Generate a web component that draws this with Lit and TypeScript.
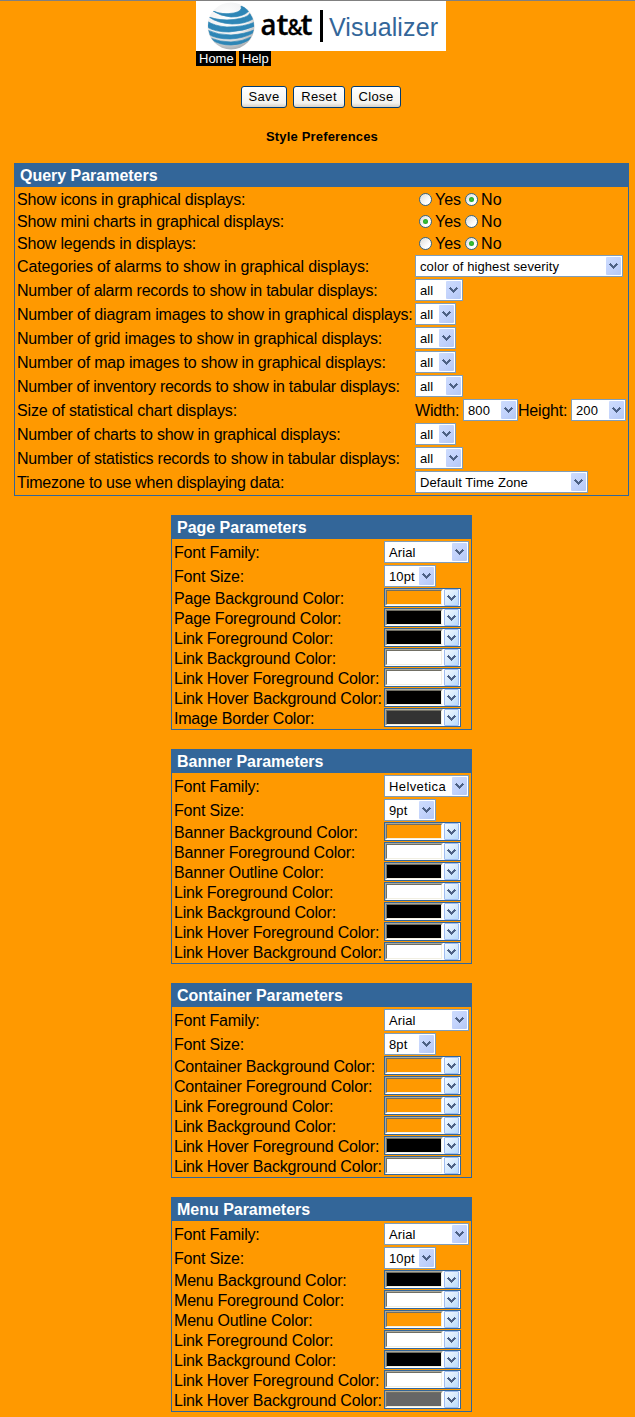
import { LitElement, html, css, svg } from "lit";
import { customElement, property } from "lit/decorators.js";
import { classMap } from "lit/directives/class-map.js";

const chevron = svg`<path d="M1 0h1v1h1v1h1v1h1v-1h1v-1h1v-1h1v1h1v1h-1v1h-1v1h-1v1h-1v1h-1v-1h-1v-1h-1v-1h-1v-1h-1v-1h1z" fill="#4d6185" shape-rendering="crispEdges"/>`;

@customElement("xp-select")
export class XpSelect extends LitElement {
  @property() value = "";
  @property({ type: Number }) width = 48;
  static styles = css`
    :host { display: block; flex: none; }
    .box { box-sizing: border-box; height: 22px; border: 1px solid #7f9db9; background: #fff; display: flex;
      align-items: center; justify-content: space-between; padding: 0 1px 0 4px; font: 13px/18px "Liberation Sans", Arial, sans-serif;
      letter-spacing: .1px; color: #000; white-space: nowrap; }
    .text { padding-top: 1px; }
    .wide { letter-spacing: .4px; }
    .arrow { width: 15px; height: 18px; flex: none; display: flex; align-items: center; justify-content: center;
      border-radius: 1px; background: linear-gradient(135deg, #cddcfd, #c3d3fc 50%, #b4c8f6); }
  `;
  render() {
    return html`<div class="box" style="width:${this.width}px"><span class=${classMap({ text: true, wide: this.value === "Helvetica" })}>${this.value}</span><span class="arrow"><svg width="9" height="6">${chevron}</svg></span></div>`;
  }
}

@customElement("color-picker")
export class ColorPicker extends LitElement {
  @property() color = "#fff";
  static styles = css`
    :host { display: block; flex: none; }
    .box { box-sizing: border-box; width: 77px; height: 19px; border: 1px solid #336699; display: flex; background: #fff; }
    .well { box-sizing: border-box; width: 58px; height: 17px; border: 1px solid; border-color: #aca899 #fff #fff #aca899; }
    .fill { box-sizing: border-box; height: 15px; border: 1px solid; border-color: #716f64 #f1efe2 #f1efe2 #716f64; }
    .arrow { box-sizing: border-box; margin: 0 1px; width: 15px; height: 17px; display: flex; align-items: center; justify-content: center;
      border: 1px solid #9ebcf0; border-radius: 1px; background: linear-gradient(135deg, #f4faff, #b9dafb); }
  `;
  render() {
    return html`<div class="box"><div class="well"><div class="fill" style="background:${this.color}"></div></div><div class="arrow"><svg width="9" height="6">${chevron}</svg></div></div>`;
  }
}

// label, selected value, select width, label tracking
type Row = [string, string, number, number];
const queryRows: Row[] = [
  ["Categories of alarms to show in graphical displays:", "color of highest severity", 208, -0.16],
  ["Number of alarm records to show in tabular displays:", "all", 48, -0.25],
  ["Number of diagram images to show in graphical displays:", "all", 41, -0.18],
  ["Number of grid images to show in graphical displays:", "all", 41, -0.18],
  ["Number of map images to show in graphical displays:", "all", 41, -0.2],
  ["Number of inventory records to show in tabular displays:", "all", 48, -0.28],
  ["Size of statistical chart displays:", "", 0, -0.17],
  ["Number of charts to show in graphical displays:", "all", 41, -0.25],
  ["Number of statistics records to show in tabular displays:", "all", 48, -0.21],
  ["Timezone to use when displaying data:", "Default Time Zone", 173, -0.24],
];

const O = "#ff9900", K = "#000000", W = "#ffffff";
const panels: { title: string; family: string; size: string; colors: [string, string][] }[] = [
  { title: "Page", family: "Arial", size: "10pt", colors: [
    ["Page Background", O], ["Page Foreground", K], ["Link Foreground", K], ["Link Background", W],
    ["Link Hover Foreground", W], ["Link Hover Background", K], ["Image Border", "#333333"]] },
  { title: "Banner", family: "Helvetica", size: "9pt", colors: [
    ["Banner Background", O], ["Banner Foreground", W], ["Banner Outline", K], ["Link Foreground", W],
    ["Link Background", K], ["Link Hover Foreground", K], ["Link Hover Background", W]] },
  { title: "Container", family: "Arial", size: "8pt", colors: [
    ["Container Background", O], ["Container Foreground", O], ["Link Foreground", O], ["Link Background", O],
    ["Link Hover Foreground", K], ["Link Hover Background", W]] },
  { title: "Menu", family: "Arial", size: "10pt", colors: [
    ["Menu Background", K], ["Menu Foreground", W], ["Menu Outline", O], ["Link Foreground", W],
    ["Link Background", K], ["Link Hover Foreground", W], ["Link Hover Background", "#666666"]] },
];

@customElement("app-root")
export class AppRoot extends LitElement {
  static styles = css`
    :host { display: block; box-sizing: border-box; height: 1417px; overflow: hidden; background: #ff9900; border-top: 1px solid #808080;
      font: 16px/18px "Liberation Sans", Arial, sans-serif; color: #000; }
    .banner { width: 250px; margin-left: 196px; }
    .logo { display: block; background: #fff; }
    .nav { display: flex; gap: 3px; height: 15px; font-size: 13px; line-height: 15px; }
    .nav a { background: #000; color: #fff; padding: 0 3px; box-sizing: border-box; width: 40px; }
    .nav a.help { width: 32px; }
    .buttons { display: flex; gap: 6px; margin: 20px 0 0 241px; }
    button { box-sizing: border-box; height: 22px; padding: 0; border: 1px solid #003c74; border-radius: 3px; font: 13px/18px "Liberation Sans", Arial, sans-serif;
      letter-spacing: .35px; color: #000; background: linear-gradient(#fff, #f3f3ef 80%, #d6d0c5); }
    .save { width: 46px; } .reset { width: 52px; } .close { width: 50px; }
    h1 { margin: 20px 0 0 9px; font-size: 13px; line-height: 18px; letter-spacing: .17px; text-align: center; }
    .panel { box-sizing: border-box; width: 301px; margin: 0 0 19px 171px; border: 1px solid #336699; padding-bottom: 1px; }
    .panel.query { width: 615px; margin: 17px 0 19px 14px; }
    h2 { margin: 0 0 1px; height: 23px; padding-left: 5px; background: #336699; color: #fff; font-size: 16px; line-height: 23px; letter-spacing: -.02px; }
    .row { display: grid; grid-template-columns: 210px auto; height: 24px; align-items: center; padding-left: 2px; white-space: nowrap; }
    .label { padding-top: 2px; letter-spacing: -.2px; }
    .query .row { grid-template-columns: 398px auto; }
    .query .row.radio { height: 22px; }
    .row.color { height: 20px; align-items: start; }
    .row.color .label { line-height: 18px; }
    .cell { display: flex; align-items: center; }
    .dot { flex: none; box-sizing: border-box; width: 13px; height: 13px; border: 1px solid #33668c; border-radius: 50%; background: linear-gradient(135deg, #dcdcd7, #fff 70%); display: flex; align-items: center; justify-content: center; }
    .dot.on::before { content: ""; width: 5px; height: 5px; border-radius: 50%; background: radial-gradient(#3fc43a, #1a9a1a); }
    .radios { padding-left: 4px; }
    .radios span { margin: 0 4px 0 3px; padding-top: 2px; }
    .w { width: 48px; } .h { width: 53px; }
  `;
  radio(label: string, yes: boolean) {
    return html`<div class="row radio"><span class="label">${label}</span><div class="cell radios">
      <i class=${classMap({ dot: true, on: yes })}></i><span>Yes</span><i class=${classMap({ dot: true, on: !yes })}></i><span>No</span></div></div>`;
  }
  render() {
    return html`
      <div class="banner">
        <svg class="logo" width="250" height="50" viewBox="0 0 250 50">
          <defs><radialGradient id="g" cx=".42" cy=".3" r=".72"><stop offset="0" stop-color="#fff"/><stop offset=".6" stop-color="#f0f1f2"/><stop offset="1" stop-color="#a9adb0"/></radialGradient>
          <clipPath id="c"><circle cx="35" cy="25" r="23"/></clipPath></defs>
          <circle cx="35" cy="25" r="23.5" fill="url(#g)"/>
          <g clip-path="url(#c)" fill="#2e86b6" stroke="#2e86b6" stroke-width=".7">
            <path d="M17 10Q26 14 38 12Q47 10 45 5Q52 7 53 10Q47 16 35 16Q24 15 17 10Z"/>
            <path d="M13 16Q24 20 38 18.500Q51 17 54 12.500L57 18Q49 23 36 23Q21 22 13 16Z"/>
            <path d="M11 20Q18 25 31 26Q48 26 59 21V25Q48 30 33 31Q19 31 11 26Z"/>
            <path d="M11 29Q22 34 35 34Q49 33 58 29L57 32Q47 37.500 34 38Q20 38 12 33Z"/>
            <path d="M14 37Q24 41 35 41Q47 40.500 55 36L53 39Q45 44 35 44Q24 44 16 39Z"/>
          </g>
          <g font-family="Open Sans, sans-serif" font-weight="600" stroke="#000" stroke-width=".3">
            <text y="34" font-size="28"><tspan x="64.500" textLength="16" lengthAdjust="spacingAndGlyphs">a</tspan><tspan x="80.500" textLength="12" lengthAdjust="spacingAndGlyphs">t</tspan><tspan x="91.500" font-size="21" textLength="15" lengthAdjust="spacingAndGlyphs">&amp;</tspan><tspan x="104.500" textLength="12" lengthAdjust="spacingAndGlyphs">t</tspan></text>
          </g>
          <path d="M124 9h3v32h-3z"/>
          <text x="133" y="35" font-family="Liberation Sans, Arial, sans-serif" font-size="25" fill="#336699" textLength="109">Visualizer</text>
        </svg>
        <div class="nav"><a>Home</a><a class="help">Help</a></div>
      </div>
      <div class="buttons"><button class="save">Save</button><button class="reset">Reset</button><button class="close">Close</button></div>
      <h1>Style Preferences</h1>
      <section class="panel query">
        <h2>Query Parameters</h2>
        ${this.radio("Show icons in graphical displays:", false)}
        ${this.radio("Show mini charts in graphical displays:", true)}
        ${this.radio("Show legends in displays:", false)}
        ${queryRows.map(([l, v, w, t]) => html`<div class="row"><span class="label" style="letter-spacing:${t}px">${l}</span><div class="cell">${w
          ? html`<xp-select .value=${v} .width=${w}></xp-select>`
          : html`<span class="label w">Width:</span><xp-select value="800" width="55"></xp-select><span class="label h">Height:</span><xp-select value="200" width="55"></xp-select>`}</div></div>`)}
      </section>
      ${panels.map((p) => html`<section class="panel">
        <h2>${p.title} Parameters</h2>
        <div class="row"><span class="label">Font Family:</span><xp-select .value=${p.family} width="85"></xp-select></div>
        <div class="row"><span class="label">Font Size:</span><xp-select .value=${p.size} width="52"></xp-select></div>
        ${p.colors.map(([n, c]) => html`<div class="row color"><span class="label">${n} Color:</span><color-picker .color=${c}></color-picker></div>`)}
      </section>`)}
    `;
  }
}
